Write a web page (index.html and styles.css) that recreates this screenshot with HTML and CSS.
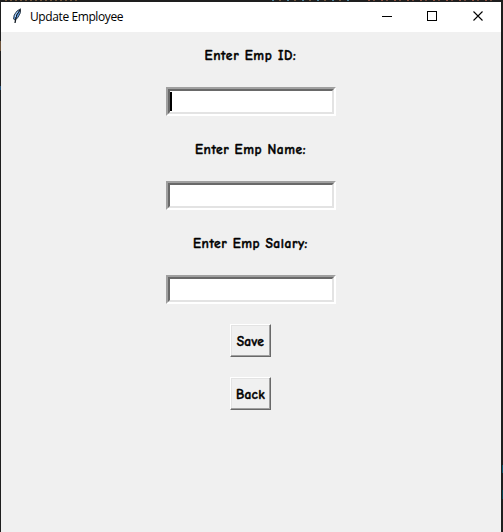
FILE: index.html
```
<!DOCTYPE html>
<html lang="en">
<head>
<meta charset="utf-8">
<title>Update Employee</title>
<link rel="stylesheet" href="styles.css">
</head>
<body>
<main class="window">
  <header class="titlebar">
    <svg class="feather" width="11" height="16" viewBox="0 0 11 16">
      <path d="M8.500.8 5 3 2.200 7l-.7 4 1.500 1 3-2.500 2.500-5z" fill="#5b96dc" stroke="#39434d"/>
      <path d="M8 2 4.500 7l-1.500 8" fill="none" stroke="#101820" stroke-width="1.300"/>
      <path d="M6 3.500 3.500 7v2" fill="none" stroke="#a9d0f8"/>
    </svg>
    <h1 class="title">Update Employee</h1>
    <div class="controls">
      <svg width="46" height="30" viewBox="0 0 46 30" shape-rendering="crispEdges"><path d="M18 14h10v1H18z"/></svg>
      <svg width="46" height="30" viewBox="0 0 46 30" shape-rendering="crispEdges"><path d="M17.500 9.500h9v9h-9z" fill="none" stroke="#000"/></svg>
      <svg width="46" height="30" viewBox="0 0 46 30"><path d="m17.500 9.500 9 9m0-9-9 9" fill="none" stroke="#000" stroke-width="1.100"/></svg>
    </div>
  </header>
  <form class="form">
    <label class="label label-id" for="id">Enter Emp ID:</label>
    <div class="entry" id="id"><span class="caret"></span></div>
    <label class="label label-name" for="name">Enter Emp Name:</label>
    <div class="entry" id="name"></div>
    <label class="label label-salary" for="salary">Enter Emp Salary:</label>
    <div class="entry" id="salary"></div>
    <button class="button" type="button">Save</button>
    <button class="button" type="button">Back</button>
  </form>
</main>
</body>
</html>
```
FILE: styles.css
```
*, *::before { box-sizing: border-box; }
body {
  margin: 0;
  height: 532px;
  padding: 2px 2px 0 1px;
  overflow: hidden;
  background: linear-gradient(90deg, #5a4634, #806040) 0 41px / 1px 10px no-repeat,
    linear-gradient(#245078, #245078) 0 86px / 1px 4px no-repeat,
    linear-gradient(#07536a, #07536a) 100% 465px / 1px 8px no-repeat,
    linear-gradient(#08414f, #08414f) 100% 490px / 1px 9px no-repeat,
    repeating-linear-gradient(90deg, #8a5140 0 2px, #1e1e1e 2px 5px, #6b4538 5px 7px, #1e1e1e 7px 13px) 368px 0 / 128px 1px no-repeat,
    repeating-linear-gradient(90deg, #4d8298 0 2px, #1e1e1e 2px 7px, #705438 7px 9px, #1e1e1e 9px 15px) 272px 0 / 82px 1px no-repeat,
    repeating-linear-gradient(90deg, #705438 0 2px, #1e1e1e 2px 5px) 5px 0 / 72px 1px no-repeat,
    #1e1e1e;
}
.window { height: 530px; background: #f0f0f0; }
.titlebar {
  display: flex;
  height: 29px;
  background: #fff;
  height: 30px;
}
.feather { margin: 6px 0 0 11px; }
.title {
  flex: 1;
  margin: 0 0 0 7px;
  font: 400 12px/29px "Segoe UI", "Open Sans", sans-serif;
  letter-spacing: -0.4px;
  color: #000;
}
.controls { display: flex; margin-right: -1px; }
.form {
  display: flex;
  flex-direction: column;
  align-items: center;
  padding: 10px 1px 0 0;
}
.label, .button {
  font: 700 13.5px/27px "Comic Sans MS", "Comic Neue", Lato, sans-serif;
  color: #000;
  white-space: nowrap;
  -webkit-text-stroke: 0.4px #000;
}
.label { height: 25px; margin-bottom: 20px; }
.label-id { letter-spacing: 0.65px; }
.label-name { letter-spacing: 0.55px; }
.label-salary { letter-spacing: 0.55px; }
.entry {
  width: 170px;
  height: 29px;
  margin-bottom: 20px;
  border: 2px solid;
  border-color: #a0a0a0 #fff #fff #a0a0a0;
  background: #fff;
  display: flex;
}
.entry::before {
  content: "";
  width: 166px;
  flex: none;
  border: 2px solid;
  border-color: #696969 #e3e3e3 #e3e3e3 #696969;
}
.caret {
  width: 2px;
  height: 19px;
  margin: 3px 0 0 -164px;
  background: #000;
  z-index: 1;
}
.button {
  width: 41px;
  height: 33px;
  margin: 0 0 20px;
  padding: 1px 0 0;
  border: 1px solid;
  border-color: #fff #696969 #696969 #fff;
  box-shadow: inset -1px -1px #a0a0a0, inset 1px 1px #e3e3e3;
  background: #f0f0f0;
  letter-spacing: 0.3px;
}
```
